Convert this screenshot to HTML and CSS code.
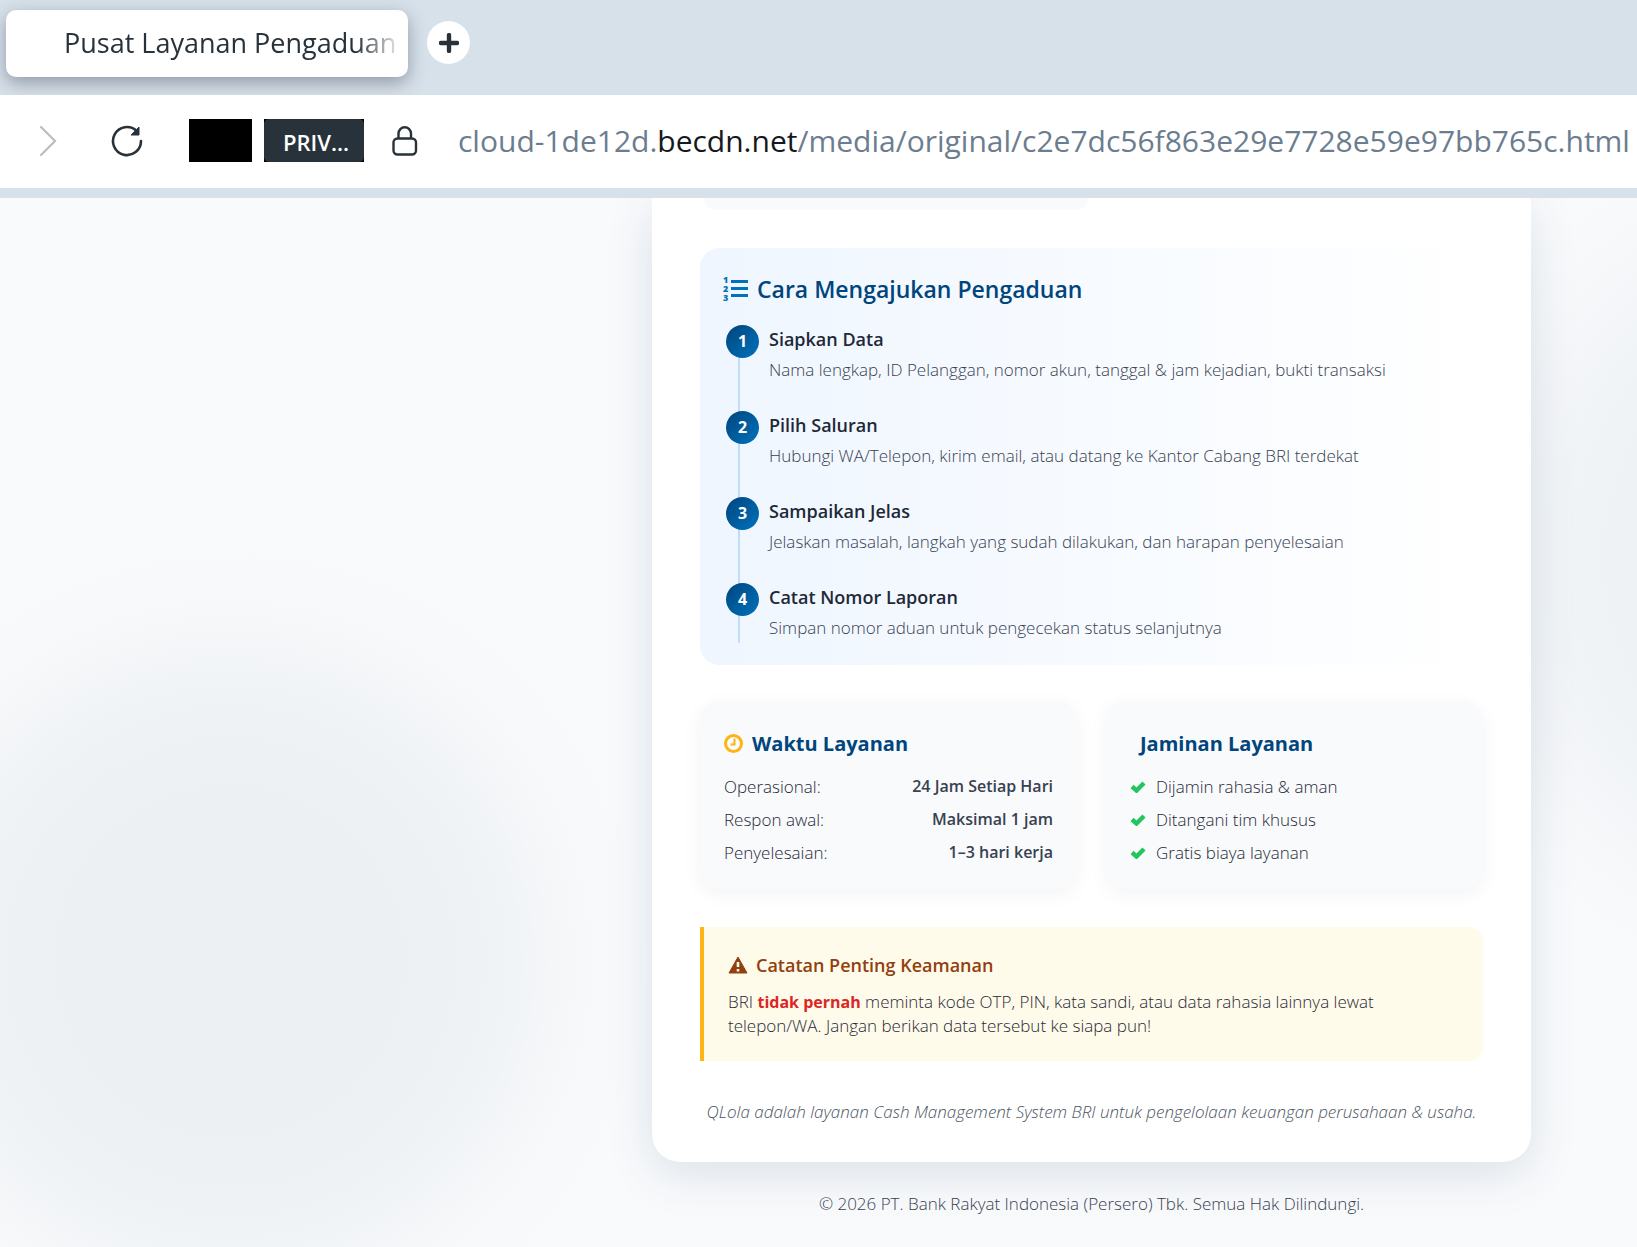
FILE: index.html
```html
<!DOCTYPE html>
<html lang="id">
<head>
    <meta charset="UTF-8">
    <meta name="viewport" content="width=device-width, initial-scale=1.0">
    <title>Pusat Layanan Pengaduan</title>
    <link rel="stylesheet" href="styles.css">
</head>
<body>
    <header class="browser">
        <div class="tab-strip">
            <div class="tab"><span class="tab-title">Pusat Layanan Pengaduan</span></div>
            <button class="new-tab" type="button" aria-label="Tab baru">
                <svg width="20" height="20" viewBox="0 0 20 20"><path d="M10 2v16M2 10h16" stroke="#28323a" stroke-width="4.4" stroke-linecap="round"/></svg>
            </button>
        </div>
        <div class="toolbar">
            <button class="tool forward" type="button" aria-label="Maju">
                <svg width="18" height="32" viewBox="0 0 18 32" fill="none"><path d="M2 2l14 14L2 30" stroke="#b9bec3" stroke-width="2.2" stroke-linecap="round"/></svg>
            </button>
            <button class="tool reload" type="button" aria-label="Muat ulang">
                <svg width="32" height="32" viewBox="0 0 32 32" fill="none"><path d="M30 16A14 14 0 1 1 25.5 5.8" stroke="#28323a" stroke-width="2.6" stroke-linecap="round"/><path d="M28 2v8h-8z" fill="#28323a" stroke="#28323a" stroke-width="1" stroke-linejoin="round"/></svg>
            </button>
            <span class="blank"></span>
            <span class="private"><span class="private-label">PRIV...</span></span>
            <svg class="lock" width="26" height="30" viewBox="0 0 26 30" fill="none" stroke="#28323a" stroke-width="2.4"><rect x="1.5" y="12.5" width="22.5" height="16" rx="4"/><path d="M6.5 12.5V7.5a6.200 6.200 0 0 1 12.500 0v5"/></svg>
            <div class="url">cloud-1de12d.<b class="domain">becdn.net</b>/media/original/c2e7dc56f863e29e7728e59e97bb765c.html</div>
        </div>
    </header>

    <main class="page">
        <article class="card">
            <div class="channel"></div>

            <section class="steps">
                <h2 class="steps-title">
                    <svg class="list-icon" width="24" height="24" viewBox="0 0 24 24" fill="#0072bc"><rect x="7" y="3" width="17" height="3"/><rect x="7" y="10" width="17" height="3"/><rect x="7" y="17" width="17" height="3"/><g class="list-num"><text x="-1" y="6">1</text><text x="-1" y="15">2</text><text x="-1" y="24">3</text></g></svg>
                    Cara Mengajukan Pengaduan
                </h2>
                <ol class="step-list">
                    <li class="step">
                        <span class="num">1</span>
                        <div>
                            <h3>Siapkan Data</h3>
                            <p>Nama lengkap, ID Pelanggan, nomor akun, tanggal &amp; jam kejadian, bukti transaksi</p>
                        </div>
                    </li>
                    <li class="step">
                        <span class="num">2</span>
                        <div>
                            <h3>Pilih Saluran</h3>
                            <p>Hubungi WA/Telepon, kirim email, atau datang ke Kantor Cabang BRI terdekat</p>
                        </div>
                    </li>
                    <li class="step">
                        <span class="num">3</span>
                        <div>
                            <h3>Sampaikan Jelas</h3>
                            <p>Jelaskan masalah, langkah yang sudah dilakukan, dan harapan penyelesaian</p>
                        </div>
                    </li>
                    <li class="step">
                        <span class="num">4</span>
                        <div>
                            <h3>Catat Nomor Laporan</h3>
                            <p>Simpan nomor aduan untuk pengecekan status selanjutnya</p>
                        </div>
                    </li>
                </ol>
            </section>

            <div class="info-grid">
                <section class="info">
                    <h3 class="info-title">
                        <svg width="19" height="19" viewBox="0 0 19 19" fill="none" stroke="#fdb515"><circle cx="9.5" cy="9.5" r="8" stroke-width="3"/><path d="M10.5 4.5v6h-4" stroke-width="2"/></svg>
                        Waktu Layanan
                    </h3>
                    <dl class="rows">
                        <div><dt>Operasional:</dt><dd>24 Jam Setiap Hari</dd></div>
                        <div><dt>Respon awal:</dt><dd>Maksimal 1 jam</dd></div>
                        <div><dt>Penyelesaian:</dt><dd>1–3 hari kerja</dd></div>
                    </dl>
                </section>
                <section class="info">
                    <h3 class="info-title indent">Jaminan Layanan</h3>
                    <ul class="rows checks">
                        <li><svg width="16" height="12" viewBox="0 0 16 12" fill="none"><path d="M2 5.5l4.500 4L14 2" stroke="#22c55e" stroke-width="4.4"/></svg>Dijamin rahasia &amp; aman</li>
                        <li><svg width="16" height="12" viewBox="0 0 16 12" fill="none"><path d="M2 5.5l4.500 4L14 2" stroke="#22c55e" stroke-width="4.4"/></svg>Ditangani tim khusus</li>
                        <li><svg width="16" height="12" viewBox="0 0 16 12" fill="none"><path d="M2 5.5l4.500 4L14 2" stroke="#22c55e" stroke-width="4.4"/></svg>Gratis biaya layanan</li>
                    </ul>
                </section>
            </div>

            <section class="notice">
                <h3 class="notice-title">
                    <svg width="20" height="18" viewBox="0 0 20 18"><path d="M10 1l9 16H1z" fill="#92400e" stroke="#92400e" stroke-linejoin="round"/><path d="M10 6v5M10 13v2.500" stroke="#fffbeb" stroke-width="2.600"/></svg>
                    Catatan Penting Keamanan
                </h3>
                <p>BRI <strong>tidak pernah</strong> meminta kode OTP, PIN, kata sandi, atau data rahasia lainnya lewat telepon/WA. Jangan berikan data tersebut ke siapa pun!</p>
            </section>

            <p class="about">QLola adalah layanan Cash Management System BRI untuk pengelolaan keuangan perusahaan &amp; usaha.</p>
        </article>
        <footer class="copyright">© 2026 PT. Bank Rakyat Indonesia (Persero) Tbk. Semua Hak Dilindungi.</footer>
    </main>
</body>
</html>
```
FILE: styles.css
```css
* {
    box-sizing: border-box;
    margin: 0;
    padding: 0;
}

body {
    display: flex;
    flex-direction: column;
    min-height: 100vh;
    font-family: 'Segoe UI', 'Open Sans', 'Noto Sans', sans-serif;
    font-size: 17px;
    color: #1f2937;
    background-color: #f9fafc;
}

svg {
    display: block;
    flex: none;
}

button {
    border: none;
    background: none;
    cursor: pointer;
}

/* Browser bar */
.tab-strip {
    display: flex;
    align-items: flex-start;
    gap: 19px;
    height: 95px;
    padding: 10px 6px;
    background-color: #d7e1ea;
    overflow: hidden;
}

.tab {
    width: 402px;
    height: 67px;
    padding: 0 12px 0 58px;
    border-radius: 10px;
    background-color: #fff;
    box-shadow: 0 6px 18px rgba(40, 50, 65, 0.4);
}

.tab-title {
    display: block;
    overflow: hidden;
    white-space: nowrap;
    font-size: 27px;
    line-height: 66px;
    color: #28323a;
    mask-image: linear-gradient(to right, #000 88%, rgba(0, 0, 0, 0.15));
}

.new-tab {
    display: grid;
    place-items: center;
    width: 43px;
    height: 43px;
    margin-top: 11px;
    border-radius: 50%;
    background-color: #fff;
}

.toolbar {
    display: flex;
    align-items: center;
    height: 103px;
    padding: 0 0 2px 39px;
    border-bottom: 10px solid #d7e1ea;
    background-color: #fff;
    overflow: hidden;
}

.reload {
    margin-left: 54px;
}

.blank {
    flex: none;
    width: 63px;
    height: 43px;
    margin-left: 46px;
    background-color: #000;
}

.private {
    flex: none;
    width: 100px;
    height: 43px;
    margin: 0 28px 0 12px;
    background-color: #000;
}

.private-label {
    display: block;
    padding: 3px 0 0 4px;
    border-radius: 5px;
    background-color: #28323a;
    color: #fff;
    font-size: 22px;
    font-weight: 600;
    line-height: 40px;
    text-align: center;
}

.url {
    margin-left: 40px;
    white-space: nowrap;
    font-size: 30px;
    line-height: 40px;
    color: #6b7d8f;
}

.domain {
    font-weight: 400;
    color: #15191d;
}

/* Page */
.page {
    display: grid;
    flex: 1;
    grid-template-columns: 652fr 879fr 106fr;
    grid-template-rows: auto 1fr;
    overflow: hidden;
    background-image:
        radial-gradient(circle at 230px 764px, rgba(0, 60, 80, 0.056) 130px, rgba(0, 60, 80, 0.042) 240px, rgba(0, 60, 80, 0.03) 290px, rgba(0, 60, 80, 0.008) 360px, transparent 430px),
        radial-gradient(circle at 1850px 362px, rgba(0, 60, 90, 0.056) 130px, rgba(0, 60, 90, 0.042) 230px, rgba(0, 60, 90, 0.03) 300px, rgba(0, 60, 90, 0.006) 400px, transparent 450px);
}

.card {
    grid-column: 2;
    padding: 0 48px 37px;
    border-radius: 0 0 28px 28px;
    background-color: #fff;
    box-shadow: 0 12px 48px rgba(0, 60, 90, 0.13);
}

.channel {
    width: 49%;
    height: 12px;
    margin-left: 4px;
    border-radius: 0 0 16px 16px;
    background-color: #f9fafc;
}

.steps {
    margin-top: 38px;
    padding: 24px 24px 22px;
    border-radius: 20px;
    background-image: linear-gradient(to right, #eff6ff, #fff);
}

.steps-title {
    display: flex;
    align-items: center;
    gap: 9px;
    height: 34px;
    font-size: 23px;
    font-weight: 600;
    color: #00457c;
}

.list-icon {
    overflow: visible;
}

.list-num {
    font-size: 9px;
    font-weight: 800;
}

.step-list {
    margin-top: 19px;
    list-style: none;
    background: linear-gradient(#bfdbfe, #bfdbfe) 14px 0 / 2px 100% no-repeat;
}

.step {
    display: flex;
    gap: 10px;
    padding-left: 2px;
}

.step + .step {
    margin-top: 26px;
}

.num {
    flex: none;
    width: 33px;
    height: 33px;
    border-radius: 50%;
    background-image: linear-gradient(135deg, #00457c, #0072bc);
    color: #fff;
    font-size: 16px;
    font-weight: 700;
    line-height: 32px;
    text-align: center;
}

.step h3 {
    font-size: 18px;
    font-weight: 600;
    line-height: 28px;
}

.step p {
    margin-top: 2px;
    font-weight: 300;
    line-height: 30px;
    color: #374151;
}

.info-grid {
    display: grid;
    grid-template-columns: 1fr 1fr;
    gap: 29px;
    margin-top: 36px;
}

.info {
    padding: 24px 24px 20px;
    border-radius: 20px;
    background-color: #f9fafc;
    box-shadow: 0 5px 20px rgba(0, 0, 0, 0.05);
}

.info-title {
    display: flex;
    align-items: center;
    gap: 9px;
    height: 37px;
    font-size: 20px;
    font-weight: 700;
    color: #00457c;
}

.indent {
    padding-left: 10px;
}

.rows {
    margin-top: 8px;
    line-height: 33px;
    font-weight: 300;
    list-style: none;
}

.rows div {
    display: flex;
    justify-content: space-between;
}

.rows dd {
    font-size: 16px;
    font-weight: 600;
    color: #374151;
}

.checks li {
    display: flex;
    align-items: center;
    gap: 10px;
}

.notice {
    margin-top: 38px;
    padding: 24px;
    border-left: 4px solid #fdb515;
    border-radius: 0 14px 14px 0;
    background-color: #fffbeb;
}

.notice-title {
    display: flex;
    align-items: center;
    gap: 8px;
    font-size: 18px;
    font-weight: 600;
    line-height: 28px;
    color: #92400e;
}

.notice p {
    margin-top: 11px;
    font-weight: 300;
    line-height: 23px;
}

.notice strong {
    font-size: 16px;
    font-weight: 700;
    color: #dc2626;
}

.about {
    margin-top: 38px;
    font-weight: 300;
    font-style: italic;
    line-height: 26px;
    text-align: center;
    color: #4b5563;
}

.copyright {
    grid-column: 2;
    padding: 28px 0;
    font-weight: 300;
    line-height: 28px;
    text-align: center;
    color: #374151;
}
```
